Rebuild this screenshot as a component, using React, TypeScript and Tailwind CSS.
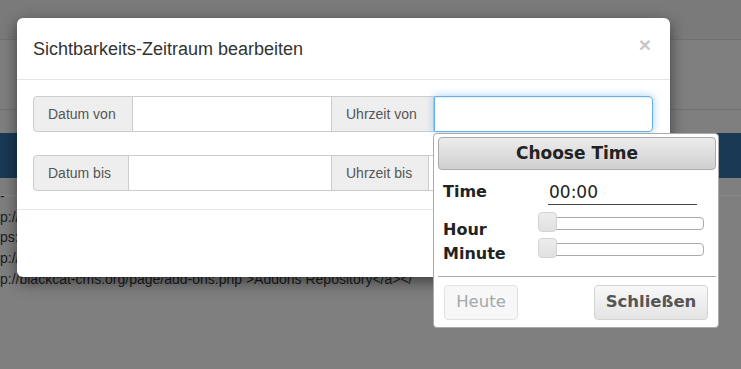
export default function App() {
  return (
    <div className="relative h-[369px] w-[741px] overflow-hidden bg-[#7f7f7f] font-['Liberation_Sans',Arial,sans-serif]">
      {/* page behind the backdrop */}
      <div className="h-[39px] bg-[#7a7a7a]" />
      <div className="h-px bg-[#717171]" />
      <div className="h-[69px]" />
      <div className="h-px bg-[#717171]" />
      <div className="h-[23px]" />
      <div className="h-[45px] bg-[#1a3955]" />
      <div className="h-[17px]" />
      <div className="h-px bg-[#8a8a8a]" />
      <div className="-mt-[10px] text-[14px] leading-[20.7px] text-[#1c1c1c] whitespace-nowrap">
        <div>-</div>
        <div>p://blackcat-cms.org/</div>
        <div>ps://blackcat-cms.org/</div>
        <div>p://blackcat-cms.org/</div>
        <div>p://blackcat-cms.org/page/add-ons.php &gt;Addons Repository&lt;/a&gt;&lt;/</div>
      </div>

      {/* modal */}
      <div className="absolute left-[17px] top-[18px] flex h-[259px] w-[653px] flex-col rounded-[6px] bg-white shadow-[0_5px_15px_rgba(0,0,0,0.5)]">
        <div className="flex h-[62px] items-center justify-between border-b border-[#e5e5e5] px-4">
          <h4 className="text-[18px] leading-[26px] text-[#333]">Sichtbarkeits-Zeitraum bearbeiten</h4>
          <span className="mr-[3px] -mt-[8px] text-[21px] font-bold leading-none text-[#c8c8c8]">×</span>
        </div>
        <div className="flex flex-col gap-[23px] px-4 pb-[18px] pt-4 text-[14px] text-[#555]">
          <div className="flex h-[36px]">
            <span className="flex w-[100px] items-center rounded-l-[4px] border border-[#ccc] bg-[#eee] pl-[14px]">Datum von</span>
            <span className="w-[199px] border-y border-r border-[#ccc]" />
            <span className="flex w-[102px] items-center border-y border-r border-[#ccc] bg-[#eee] pl-[14px]">Uhrzeit von</span>
            <span className="w-[219px] rounded-r-[4px] border border-[#66afe9] shadow-[inset_0_1px_1px_rgba(0,0,0,0.075),0_0_8px_rgba(102,175,233,0.6)]" />
          </div>
          <div className="flex h-[36px]">
            <span className="flex w-[96px] items-center rounded-l-[4px] border border-[#ccc] bg-[#eee] pl-[14px]">Datum bis</span>
            <span className="w-[203px] border-y border-r border-[#ccc]" />
            <span className="flex w-[97px] items-center border-y border-r border-[#ccc] bg-[#eee] pl-[14px]">Uhrzeit bis</span>
            <span className="w-[224px] rounded-r-[4px] border-y border-r border-[#ccc]" />
          </div>
        </div>
        <div className="flex-1 border-t border-[#e5e5e5]" />
      </div>

      {/* time picker popup */}
      <div className="absolute left-[433px] top-[133px] h-[195px] w-[286px] rounded-[4px] border border-[#aaa] bg-white pl-[4px] pt-[3px] font-['DejaVu_Sans',Verdana,sans-serif] text-[#222]">
        <div className="flex h-[33px] w-[278px] items-center justify-center rounded-[4px] border border-[#aaa] bg-gradient-to-b from-[#ececec] to-[#d0d0d0] text-[17px] font-bold">
          Choose Time
        </div>
        <div className="pl-[5px]">
          <div className="mt-[12px] flex h-[23px]">
            <span className="w-[105px] text-[16px] font-bold leading-[20px]">Time</span>
            <span className="w-[149px] border-b border-[#444] pb-[2px] pl-[1px] text-[17px] leading-[20px] text-[#222]">00:00</span>
          </div>
          <div className="mt-[7px] flex h-[26px]">
            <span className="mt-[8px] w-[95px] text-[16px] font-bold leading-[20px]">Hour</span>
            <Slider />
          </div>
          <div className="flex h-[26px]">
            <span className="mt-[6px] w-[95px] text-[16px] font-bold leading-[20px]">Minute</span>
            <Slider />
          </div>
        </div>
        <div className="mt-[12px] w-[278px] border-t border-[#aaa]" />
        <div className="mt-[8px] flex w-[278px] justify-between pl-[6px] pr-[8px] text-[16.5px]">
          <button className="flex h-[35px] w-[74px] items-center justify-center rounded-[4px] border border-[#e2e2e2] bg-[#f7f7f7] text-[#a3a8ad]">
            Heute
          </button>
          <button className="flex h-[35px] w-[114px] items-center justify-center rounded-[4px] border border-[#d3d3d3] bg-gradient-to-b from-[#f8f8f8] to-[#e4e4e4] font-bold text-[#555]">
            Schließen
          </button>
        </div>
      </div>
    </div>
  );
}

function Slider() {
  return (
    <div className="relative h-[20px] w-[166px]">
      <div className="absolute left-0 right-0 top-[5px] h-[13px] rounded-[4px] border border-[#aaa] bg-white" />
      <div className="absolute left-0 top-0 h-[20px] w-[19px] rounded-[4px] border border-[#d3d3d3] bg-gradient-to-b from-[#ededed] to-[#e0e0e0]" />
    </div>
  );
}
